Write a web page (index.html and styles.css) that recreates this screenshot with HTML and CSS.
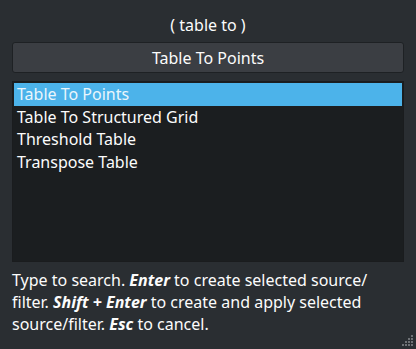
FILE: index.html
```html
<!DOCTYPE html>
<html lang="en">
<head>
    <meta charset="UTF-8">
    <title>Quick Launch</title>
    <link rel="stylesheet" href="styles.css">
</head>
<body>
    <div class="dialog">
        <div class="query">( table to )</div>
        <button class="current">Table To Points</button>
        <ul class="results">
            <li class="selected">Table To Points</li>
            <li>Table To Structured Grid</li>
            <li>Threshold Table</li>
            <li>Transpose Table</li>
        </ul>
        <p class="help">Type to search. <b>Enter</b> to create selected source/ filter. <b>Shift + Enter</b> to create and apply selected source/filter. <b>Esc</b> to cancel.</p>
        <svg class="grip" width="12" height="12" viewBox="0 0 12 12">
            <rect x="9" y="0" width="2" height="2"/>
            <rect x="6" y="3" width="2" height="2"/>
            <rect x="9" y="3" width="2" height="2"/>
            <rect x="3" y="6" width="2" height="2"/>
            <rect x="6" y="6" width="2" height="2"/>
            <rect x="9" y="6" width="2" height="2"/>
            <rect x="0" y="9" width="2" height="2"/>
            <rect x="3" y="9" width="2" height="2"/>
            <rect x="6" y="9" width="2" height="2"/>
            <rect x="9" y="9" width="2" height="2"/>
        </svg>
    </div>
</body>
</html>
```

FILE: styles.css
```css
html, body{
    margin: 0;
    height: 100%;
}
body{
    background-color: #2a2e32;
    font-family: 'Noto Sans', 'Open Sans', sans-serif;
    font-size: 16px;
    color: #fcfcfc;
}
.dialog{
    position: relative;
    height: 100%;
    box-sizing: border-box;
    padding: 12px 12px 0 12px;
    display: flex;
    flex-direction: column;
}
.query{
    text-align: center;
    height: 26px;
    line-height: 26px;
    margin-bottom: 4px;
}
.current{
    height: 31px;
    font-family: inherit;
    font-size: 16px;
    color: #fcfcfc;
    background-color: #3b3e43;
    border: 1px solid #1e2124;
    border-radius: 3px;
    padding: 0;
    margin-bottom: 8px;
}
.results{
    list-style: none;
    margin: 0;
    padding: 1px;
    height: 181px;
    box-sizing: border-box;
    background-color: #1b1e20;
    border: 1px solid #1a1c1e;
}
.results li{
    height: 22.5px;
    line-height: 22px;
    padding-left: 3px;
}
.results .selected{
    background-color: #4cb3ea;
    color: #eaf6fc;
}
.help{
    margin: 7px 0 0 0;
    line-height: 22px;
}
.help b{
    font-style: italic;
    font-weight: 700;
}
.grip{
    position: absolute;
    right: 2px;
    bottom: 2px;
    fill: #6e7175;
}
```
